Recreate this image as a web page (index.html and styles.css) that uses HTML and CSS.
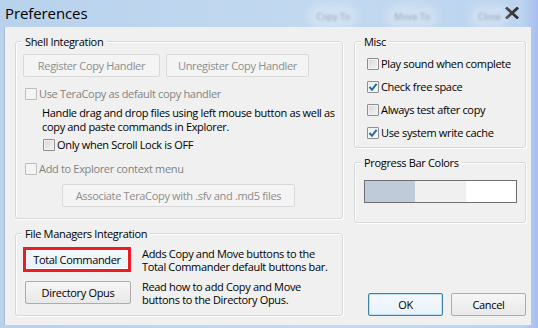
FILE: index.html
```html
<!DOCTYPE html>
<html>
<head>
<meta charset="utf-8">
<title>Preferences</title>
<link rel="stylesheet" href="styles.css">
</head>
<body>
<div class="window">
  <div class="titlebar">
    <span class="title">Preferences</span>
    <div class="ghosts">
      <span class="ghost g1">Copy To</span>
      <span class="ghost g2">Move To</span>
      <span class="ghost g3">Close</span>
    </div>
    <svg class="close" width="14" height="12" viewBox="0 0 14 12"><path d="M2 1.5 L12 10.5 M12 1.5 L2 10.5" stroke="#2f2f2f" stroke-width="2.8" stroke-linecap="square" fill="none"/></svg>
  </div>
  <div class="client">
    <div class="col col-left">
      <div class="group shell">
        <div class="legend">Shell Integration</div>
        <div class="btnrow">
          <button class="btn disabled w-reg">Register Copy Handler</button>
          <button class="btn disabled w-unreg">Unregister Copy Handler</button>
        </div>
        <div class="cb disabled cb-default"><span class="box"></span>Use TeraCopy as default copy handler</div>
        <p class="desc">Handle drag and drop files using left mouse button as well as<br>copy and paste commands in Explorer.</p>
        <div class="cb cb-scroll"><span class="box"></span>Only when Scroll Lock is OFF</div>
        <div class="cb disabled cb-context"><span class="box"></span>Add to Explorer context menu</div>
        <button class="btn disabled assoc">Associate TeraCopy with .sfv and .md5 files</button>
      </div>
      <div class="group fm">
        <div class="legend">File Managers Integration</div>
        <div class="fmrow row1">
          <div class="fmcell highlight"><button class="btn hot">Total Commander</button></div>
          <p class="fmtext">Adds Copy and Move buttons to the<br>Total Commander default buttons bar.</p>
        </div>
        <div class="fmrow row2">
          <div class="fmcell plain"><button class="btn">Directory Opus</button></div>
          <p class="fmtext">Read how to add Copy and Move<br>buttons to the Directory Opus.</p>
        </div>
      </div>
    </div>
    <div class="col col-right">
      <div class="group misc">
        <div class="legend">Misc</div>
        <div class="cb mrow first"><span class="box"></span>Play sound when complete</div>
        <div class="cb mrow"><span class="box checked"><svg width="10" height="10" viewBox="0 0 10 10"><path d="M1.5 5 L4 7.8 L8.6 1.8" stroke="#23709f" stroke-width="2" fill="none"/></svg></span>Check free space</div>
        <div class="cb mrow"><span class="box"></span>Always test after copy</div>
        <div class="cb mrow"><span class="box checked"><svg width="10" height="10" viewBox="0 0 10 10"><path d="M1.5 5 L4 7.8 L8.6 1.8" stroke="#23709f" stroke-width="2" fill="none"/></svg></span>Use system write cache</div>
      </div>
      <div class="group progress">
        <div class="legend">Progress Bar Colors</div>
        <div class="bar">
          <span class="seg s1"></span><span class="seg s2"></span><span class="seg s3"></span>
        </div>
      </div>
      <div class="actions">
        <button class="btn default">OK</button>
        <button class="btn">Cancel</button>
      </div>
    </div>
  </div>
</div>
</body>
</html>
```
FILE: styles.css
```css
* { box-sizing: border-box; }
html, body { margin: 0; padding: 0; }
body {
  width: 538px;
  height: 328px;
  overflow: hidden;
  font-family: "Open Sans", "Noto Sans", sans-serif;
  font-size: 11px;
  letter-spacing: -0.33px;
  color: #000;
  background: #bcd5ee;
}
.window {
  width: 538px;
  height: 328px;
  display: flex;
  flex-direction: column;
  background: linear-gradient(90deg, #b9d2ec 0%, #c2d9f0 60%, #bcd4ef 97%, #a9bdf0 100%);
}
.titlebar {
  height: 27px;
  flex: none;
  display: flex;
  align-items: center;
  padding-left: 5px;
}
.title {
  font-size: 15px;
  letter-spacing: -0.1px;
  line-height: 20px;
  margin-top: -1px;
  flex: none;
}
.ghosts {
  display: flex;
  flex: none;
  margin-left: 225px;
  white-space: nowrap;
}
.ghost {
  font-size: 9px;
  letter-spacing: 0;
  color: rgba(60, 70, 90, 0.38);
  filter: blur(1px);
  margin-top: 5px;
  padding: 2px 4px;
  border-radius: 6px;
  background: rgba(235, 240, 246, 0.35);
  box-shadow: 0 0 8px 4px rgba(235, 240, 246, 0.35);
}
.g2 { margin-left: 36px; }
.g3 { margin-left: 40px; }
.close { margin-left: auto; margin-right: 19px; margin-top: -2px; flex: none; }

.client {
  flex: 1;
  margin: 0 7px 3px 5px;
  background: #f0f0f0;
  box-shadow: -1px 0 0 #a7bbd3;
  display: flex;
  gap: 11px;
  padding: 14px 5px 9px 10px;
}
.col { display: flex; flex-direction: column; }
.col-left { width: 328px; }
.col-right { width: 172px; }

.group {
  border: 1px solid #d5d9dc;
  border-radius: 3px;
  box-shadow: inset 1px 1px 0 #fff, 1px 1px 0 #fff;
  flex: none;
}
.legend {
  display: table;
  height: 15px;
  line-height: 15px;
  margin: -8px 0 0 6px;
  padding: 0 3px;
  background: #f0f0f0;
}
.shell { height: 178px; }
.fm { height: 83px; margin-top: 14px; }
.misc { height: 107px; }
.progress { height: 61px; margin-top: 14px; }

.btn {
  font: inherit;
  letter-spacing: inherit;
  height: 23px;
  padding: 0;
  border: 1px solid #acacac;
  border-radius: 2px;
  background: linear-gradient(#f6f6f6, #e8e8e8);
  color: #000;
  display: block;
  line-height: 20px;
}
.btn.disabled {
  background: #f4f4f4;
  border-color: #d9d9d9;
  color: #8d8d8d;
}
.btnrow { display: flex; gap: 6px; margin: 5px 0 0 7px; }
.w-reg { width: 137px; }
.w-unreg { width: 143px; }
.assoc { width: 233px; margin: 8px 0 0 46px; }

.cb {
  display: flex;
  align-items: center;
  height: 14px;
  line-height: 14px;
  white-space: nowrap;
}
.cb.disabled { color: #838383; }
.box {
  width: 12px;
  height: 12px;
  margin-right: 2px;
  border: 1px solid #8e8f8f;
  border-radius: 1px;
  background: linear-gradient(135deg, #d6d6d6, #f6f6f6);
  box-shadow: inset 0 0 0 1px #f3f3f3;
  flex: none;
  display: flex;
  align-items: center;
  justify-content: center;
}
.box.checked { background: linear-gradient(135deg, #e6edf3, #fbfcfd); }
.cb.disabled .box {
  border-color: #bcbcbc;
  background: #f4f4f4;
  box-shadow: none;
}
.cb-default { margin: 10px 0 0 9px; }
.desc { margin: 5px 0 0 26px; line-height: 14px; white-space: nowrap; }
.cb-scroll { margin: 4px 0 0 27px; }
.cb-context { margin: 10px 0 0 9px; }

.fmrow { display: flex; gap: 11px; margin-left: 7px; }
.row1 { margin-top: 6px; }
.row2 { margin-top: 7px; }
.fmcell { width: 108px; flex: none; }
.highlight {
  height: 25px;
  border: 3px solid #ec1c24;
}
.highlight .btn {
  width: 100%;
  height: 19px;
  line-height: 17px;
  border: 1px solid #fafcfe;
  border-radius: 0;
  background: linear-gradient(#f2f8fd, #e9f2fa);
}
.plain { padding: 1px 0 0 2px; }
.plain .btn { width: 106px; }
.fmtext { margin: 0; line-height: 13px; white-space: nowrap; }

.mrow { height: 15px; margin: 8px 0 0 12px; }
.mrow.first { margin-top: 7px; }

.bar {
  display: flex;
  width: 153px;
  height: 23px;
  margin: 10px 0 0 9px;
  border: 1px solid #6f6f6f;
}
.seg { height: 100%; }
.s1 { width: 50px; background: #bfcbd8; }
.s2 { width: 51px; background: #f0f0f0; }
.s3 { width: 50px; background: #ffffff; }

.actions {
  margin-top: auto;
  display: flex;
  justify-content: flex-end;
  gap: 8px;
}
.actions .btn { width: 75px; }
.btn.default {
  border-color: #3c7fb1;
  background: linear-gradient(#f4f9fd, #e9f2fa);
  box-shadow: inset 0 0 0 1px #bde0f4;
}
```
